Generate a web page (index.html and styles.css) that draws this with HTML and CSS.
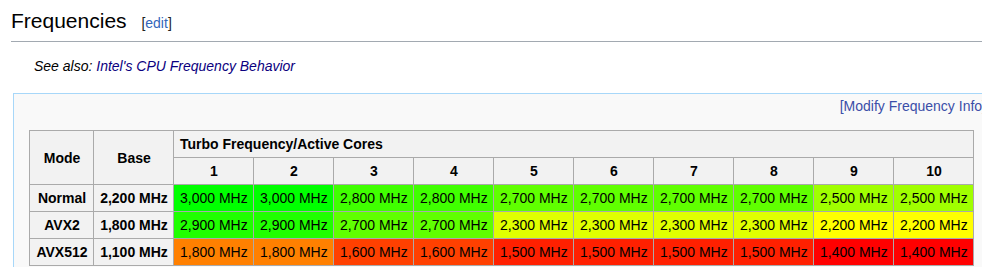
FILE: index.html
```html
<!DOCTYPE html>
<html lang="en">
<head>
<meta charset="utf-8">
<title>Frequencies</title>
<link rel="stylesheet" href="styles.css">
</head>
<body>
<div class="content">
  <h2 class="section-title">
    <span class="headline">Frequencies</span>
    <span class="editsection">[<a href="#">edit</a>]</span>
  </h2>
  <div class="hatnote">See also: <a href="#" class="visited">Intel's CPU Frequency Behavior</a></div>
  <div class="freq-box">
    <div class="modify"><a href="#">[Modify Frequency Info]</a></div>
    <table class="wikitable">
      <colgroup>
        <col class="c-mode"><col class="c-base">
        <col class="c-n"><col class="c-n"><col class="c-n"><col class="c-n"><col class="c-n">
        <col class="c-n"><col class="c-n"><col class="c-n"><col class="c-n"><col class="c-n">
      </colgroup>
      <thead>
        <tr>
          <th rowspan="2">Mode</th>
          <th rowspan="2">Base</th>
          <th colspan="10" class="left">Turbo Frequency/Active Cores</th>
        </tr>
        <tr>
          <th>1</th><th>2</th><th>3</th><th>4</th><th>5</th><th>6</th><th>7</th><th>8</th><th>9</th><th>10</th>
        </tr>
      </thead>
      <tbody>
        <tr>
          <th>Normal</th><th>2,200 MHz</th>
          <td style="background:#00ff00">3,000 MHz</td>
          <td style="background:#00ff00">3,000 MHz</td>
          <td style="background:#40ff00">2,800 MHz</td>
          <td style="background:#40ff00">2,800 MHz</td>
          <td style="background:#60ff00">2,700 MHz</td>
          <td style="background:#60ff00">2,700 MHz</td>
          <td style="background:#60ff00">2,700 MHz</td>
          <td style="background:#60ff00">2,700 MHz</td>
          <td style="background:#a0ff00">2,500 MHz</td>
          <td style="background:#a0ff00">2,500 MHz</td>
        </tr>
        <tr>
          <th>AVX2</th><th>1,800 MHz</th>
          <td style="background:#20ff00">2,900 MHz</td>
          <td style="background:#20ff00">2,900 MHz</td>
          <td style="background:#60ff00">2,700 MHz</td>
          <td style="background:#60ff00">2,700 MHz</td>
          <td style="background:#e0ff00">2,300 MHz</td>
          <td style="background:#e0ff00">2,300 MHz</td>
          <td style="background:#e0ff00">2,300 MHz</td>
          <td style="background:#e0ff00">2,300 MHz</td>
          <td style="background:#ffff00">2,200 MHz</td>
          <td style="background:#ffff00">2,200 MHz</td>
        </tr>
        <tr>
          <th>AVX512</th><th>1,100 MHz</th>
          <td style="background:#ff8000">1,800 MHz</td>
          <td style="background:#ff8000">1,800 MHz</td>
          <td style="background:#ff4000">1,600 MHz</td>
          <td style="background:#ff4000">1,600 MHz</td>
          <td style="background:#ff2000">1,500 MHz</td>
          <td style="background:#ff2000">1,500 MHz</td>
          <td style="background:#ff2000">1,500 MHz</td>
          <td style="background:#ff2000">1,500 MHz</td>
          <td style="background:#ff0000">1,400 MHz</td>
          <td style="background:#ff0000">1,400 MHz</td>
        </tr>
      </tbody>
    </table>
  </div>
</div>
</body>
</html>
```
FILE: styles.css
```css
html, body {
  margin: 0;
  padding: 0;
  overflow: hidden;
  background: #ffffff;
}

body {
  font-family: "Liberation Sans", Arial, sans-serif;
  font-size: 14px;
  color: #222222;
}

a {
  color: #0645ad;
  text-decoration: none;
}

a.visited {
  color: #0b0080;
}

.content {
  padding-left: 11px;
}

.section-title {
  margin: 7px 0 0 0;
  padding: 0 0 7px 0;
  height: 27px;
  font-weight: normal;
  font-size: 21px;
  line-height: 27px;
  color: #000000;
  border-bottom: 1px solid #a2a9b1;
  white-space: nowrap;
}

.editsection {
  font-size: 14px;
  line-height: 1;
  margin-left: 9px;
  color: #222222;
}

.editsection a {
  color: #3366bb;
}

.hatnote {
  margin-top: 14px;
  padding-left: 23px;
  line-height: 20px;
  font-style: italic;
  color: #000000;
}

.freq-box {
  margin: 17px 0 0 2px;
  width: 957px;
  padding: 2px 15px 10px 15px;
  background: #f9f9f9;
  border: 1px solid #a7d7f9;
}

.modify {
  line-height: 20px;
  text-align: right;
  white-space: nowrap;
}

.modify a {
  color: #3b4ea8;
}

.wikitable {
  margin-top: 14px;
  border-collapse: collapse;
  table-layout: fixed;
  width: 945px;
  background: #f9f9f9;
  color: #000000;
  border: 1px solid #aaaaaa;
}

.c-mode { width: 64px; }
.c-base { width: 80px; }
.c-n { width: 80px; }

.wikitable th,
.wikitable td {
  border: 1px solid #aaaaaa;
  padding: 3px 5px 3px 6px;
  line-height: 20px;
  white-space: nowrap;
  overflow: hidden;
}

.wikitable th {
  background: #f2f2f2;
  font-weight: bold;
  text-align: center;
}

.wikitable th.left {
  text-align: left;
}

.wikitable td {
  text-align: left;
  font-weight: normal;
}
```
